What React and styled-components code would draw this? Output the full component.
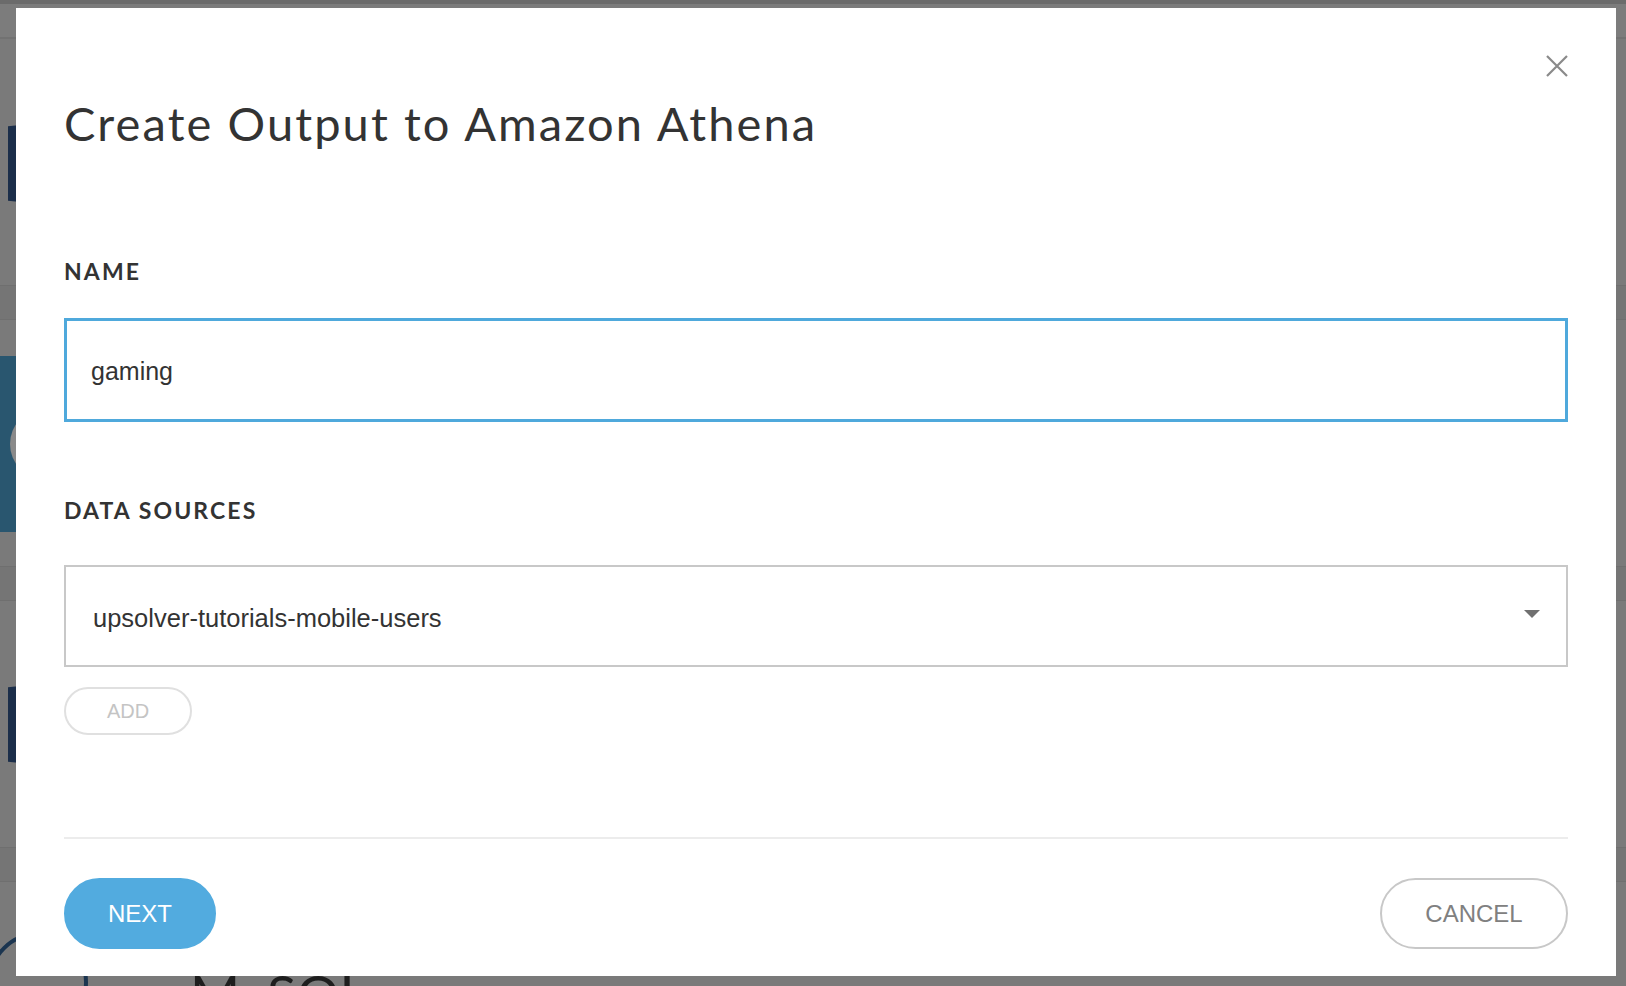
import styled, { createGlobalStyle } from "styled-components";

// 페이지 기본 스타일
const GlobalStyle = createGlobalStyle`
  html, body {
    margin: 0;
    padding: 0;
    height: 100%;
    overflow: hidden;
  }
  body {
    background: #777777;
    font-family: "Liberation Sans", Arial, sans-serif;
  }
  * {
    box-sizing: border-box;
  }
`;

// 모달 뒤에 흐리게 보이는 페이지
const Backdrop = styled.div`
  height: 986px;
  display: flex;
  flex-direction: column;
  background: #777777;
  border-top: 4px solid #6b6b6b;
  overflow: hidden;
  & > * {
    flex-shrink: 0;
  }
`;

const BgHeader = styled.div`
  height: 35px;
  background: #7c7c7c;
  border-bottom: 2px solid #727272;
`;

const BgCard = styled.div`
  height: ${(props) => props.h}px;
  background: #7a7a7a;
  display: flex;
  padding-top: ${(props) => props.logoTop}px;
`;

const BgGap = styled.div`
  height: 35px;
  background: #757575;
  border-top: 1px solid #6f6f6f;
  border-bottom: 1px solid #6f6f6f;
`;

const BgLogo = styled.div`
  margin-left: 8px;
  width: 90px;
  height: 93px;
  background: #1b2e4a;
  clip-path: polygon(0 10%, 100% 0, 100% 100%, 0 90%);
`;

const BgBanner = styled.div`
  width: 200px;
  height: 176px;
  background: #29566f;
  display: flex;
  align-items: center;
  padding-left: 10px;
`;

const BgCircle = styled.div`
  width: 70px;
  height: 70px;
  border-radius: 50%;
  background: #8a8a8a;
`;

const BgRing = styled.svg`
  margin-top: 30px;
  flex-shrink: 0;
`;

const BgText = styled.div`
  margin-left: 80px;
  margin-top: 86px;
  font-family: "Lato", sans-serif;
  font-size: 54px;
  line-height: 1;
  color: #1e1e1e;
`;

// 모달
const Modal = styled.div`
  position: fixed;
  left: 16px;
  top: 8px;
  width: 1600px;
  height: 968px;
  background: #ffffff;
  padding: 87px 48px 27px;
  display: flex;
  flex-direction: column;
`;

const CloseBtn = styled.button`
  position: absolute;
  top: 47px;
  right: 48px;
  width: 22px;
  height: 22px;
  padding: 0;
  border: none;
  background: transparent;
  display: flex;
`;

const Title = styled.h1`
  margin: 0;
  font-family: "Lato", sans-serif;
  font-weight: 400;
  font-size: 47px;
  line-height: 1.2;
  color: #333333;
  letter-spacing: 2.1px;
`;

const Label = styled.div`
  margin-top: ${(props) => props.mt}px;
  font-family: "Lato", sans-serif;
  font-weight: 700;
  font-size: 23px;
  line-height: 1.2;
  color: #333333;
  letter-spacing: 2.1px;
`;

const TextInput = styled.input`
  margin-top: 32px;
  width: 100%;
  height: 104px;
  border: 3px solid #4fa9dc;
  padding: 4px 24px 0;
  font-family: "Liberation Sans", Arial, sans-serif;
  font-size: 25px;
  color: #333333;
  outline: none;
`;

const Select = styled.div`
  margin-top: 41px;
  height: 102px;
  border: 2px solid #c8c8c8;
  padding: 0 26px 0 27px;
  display: flex;
  align-items: center;
  justify-content: space-between;
  font-family: "Liberation Sans", Arial, sans-serif;
  font-size: 25.5px;
  color: #333333;
`;

const SelectValue = styled.span`
  padding-top: 4px;
`;

const Caret = styled.svg`
  margin-bottom: 4px;
`;

const AddBtn = styled.button`
  margin-top: 20px;
  width: 128px;
  height: 48px;
  border: 2px solid #e0e0e0;
  border-radius: 24px;
  background: #ffffff;
  font-family: "Liberation Sans", Arial, sans-serif;
  font-size: 20px;
  color: #c4c4c4;
  padding: 0;
`;

const Divider = styled.hr`
  margin: 102px 0 0;
  border: none;
  height: 2px;
  background: #ececec;
`;

const Footer = styled.div`
  margin-top: 39px;
  display: flex;
  justify-content: space-between;
`;

const PillBtn = styled.button`
  height: 71px;
  width: ${(props) => props.w}px;
  border-radius: 36px;
  border: 2px solid ${(props) => (props.primary ? "#52abdf" : "#c8c8c8")};
  background: ${(props) => (props.primary ? "#52abdf" : "#ffffff")};
  color: ${(props) => (props.primary ? "#ffffff" : "#808080")};
  font-family: "Liberation Sans", Arial, sans-serif;
  font-size: 24px;
  padding: 0;
`;

export default function App() {
  return (
    <>
      <GlobalStyle />
      <Backdrop>
        <BgHeader />
        <BgCard h={246} logoTop={78}>
          <BgLogo />
        </BgCard>
        <BgGap />
        <BgCard h={246} logoTop={36}>
          <BgBanner>
            <BgCircle />
          </BgBanner>
        </BgCard>
        <BgGap />
        <BgCard h={246} logoTop={77}>
          <BgLogo />
        </BgCard>
        <BgGap />
        <BgCard h={120} logoTop={0}>
          <BgRing width="110" height="110" viewBox="0 0 110 110">
            <circle cx="38" cy="70" r="48" fill="none" stroke="#1b3550" strokeWidth="4" />
            <path d="M20 110 Q55 80 95 110" fill="none" stroke="#1b3550" strokeWidth="4" />
          </BgRing>
          <BgText>MySQL</BgText>
        </BgCard>
      </Backdrop>

      <Modal>
        <CloseBtn aria-label="close">
          <svg width="22" height="22" viewBox="0 0 22 22">
            <path d="M1 1 L21 21 M21 1 L1 21" stroke="#8a8a8a" strokeWidth="2.2" />
          </svg>
        </CloseBtn>

        <Title>Create Output to Amazon Athena</Title>

        <Label mt={107}>NAME</Label>
        <TextInput defaultValue="gaming" />

        <Label mt={75}>DATA SOURCES</Label>
        <Select>
          <SelectValue>upsolver-tutorials-mobile-users</SelectValue>
          <Caret width="16" height="9" viewBox="0 0 16 9">
            <polygon points="0,0 16,0 8,8" fill="#707070" />
          </Caret>
        </Select>
        <div>
          <AddBtn>ADD</AddBtn>
        </div>

        <Divider />

        <Footer>
          <PillBtn primary w={152}>NEXT</PillBtn>
          <PillBtn w={188}>CANCEL</PillBtn>
        </Footer>
      </Modal>
    </>
  );
}
